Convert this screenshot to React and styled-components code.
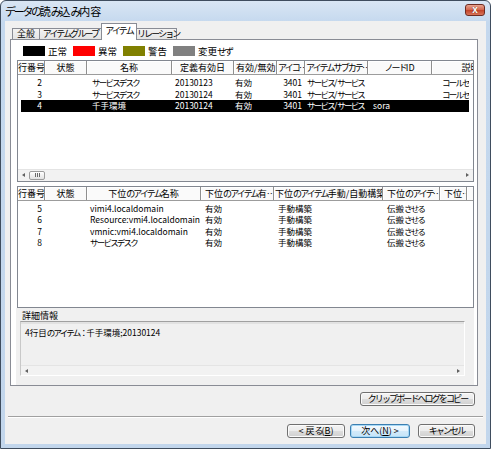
import React from 'react';
import styled, { createGlobalStyle } from 'styled-components';

const GlobalStyle = createGlobalStyle`
  html, body {
    margin: 0;
    padding: 0;
    background: #ffffff;
  }
  body {
    font-family: "Noto Sans CJK JP", "Liberation Sans", sans-serif;
    color: #000;
  }
`;

// kana in the old UI font are narrow, so squeeze them
const Kana = styled.span`
  letter-spacing: -0.21em;
`;

const KANA_RUN = /([\u3040-\u30ff\uff1a]+)/;

const Jp = ({ children }) => {
  if (typeof children !== 'string') return children;
  return children
    .split(KANA_RUN)
    .map((part, i) => (i % 2 ? <Kana key={i}>{part}</Kana> : part));
};

const Window = styled.div`
  width: 491px;
  height: 449px;
  box-sizing: border-box;
  border: 1px solid #3f4d5e;
  border-radius: 6px 6px 0 0;
  background: linear-gradient(#d9e6f4, #c4d8ee 22px, #c2d6ec 100%);
  display: flex;
  flex-direction: column;
  overflow: hidden;
`;

const TitleBar = styled.div`
  height: 20px;
  display: flex;
  align-items: center;
  justify-content: space-between;
  padding: 0 5px 0 4px;
`;

const Title = styled.span`
  font-size: 11px;
  line-height: 14px;
`;

const CloseButton = styled.div`
  width: 20px;
  height: 12px;
  box-sizing: border-box;
  margin-top: -3px;
  border: 1px solid #6e2c22;
  border-radius: 3px;
  background: linear-gradient(#e8a48f, #d2654c 50%, #c24127 51%, #d8755a);
  color: #fff;
  font-family: "Liberation Sans", sans-serif;
  font-size: 10px;
  font-weight: bold;
  line-height: 10px;
  text-align: center;
  text-shadow: 0 0 1px #5a1a10;
`;

const Client = styled.div`
  flex: 1;
  margin: 0 4px 4px 4px;
  background: #f0f0f0;
  padding: 3px 8px 0 5px;
  display: flex;
  flex-direction: column;
`;

const TabStrip = styled.div`
  display: flex;
  align-items: flex-end;
  height: 16px;
  padding-left: 3px;
  position: relative;
  z-index: 1;
  margin-bottom: -1px;
`;

const Tab = styled.div`
  width: ${(p) => p.$w}px;
  height: ${(p) => (p.$active ? 17 : 12)}px;
  box-sizing: border-box;
  margin-left: -1px;
  border: 1px solid #898c95;
  border-bottom: ${(p) => (p.$active ? 'none' : '1px solid #898c95')};
  background: ${(p) => (p.$active ? '#ffffff' : 'linear-gradient(#f3f3f3, #e4e4e4)')};
  font-size: 9px;
  line-height: ${(p) => (p.$active ? 14 : 10)}px;
  text-align: center;
  white-space: nowrap;
`;

const Panel = styled.div`
  width: 468px;
  height: 347px;
  box-sizing: border-box;
  border: 1px solid #898c95;
  background: #ffffff;
  padding: 0 3px 0 6px;
  display: flex;
  flex-direction: column;
`;

const Legend = styled.div`
  display: flex;
  height: 10px;
  margin: 6px 0 4px 6px;
`;

const LegendItem = styled.div`
  width: 50px;
  display: flex;
  align-items: center;
  gap: 3px;
  font-size: 9.5px;
  line-height: 10px;
  white-space: nowrap;
`;

const Swatch = styled.span`
  flex: 0 0 22px;
  height: 10px;
  background: ${(p) => p.$color};
`;

const ListView = styled.div`
  height: ${(p) => p.$h}px;
  box-sizing: border-box;
  border: 1px solid #828790;
  display: flex;
  flex-direction: column;
  overflow: hidden;
`;

const ListHeader = styled.div`
  display: flex;
  height: ${(p) => p.$h}px;
  box-sizing: border-box;
  border-bottom: 1px solid #9c9c9c;
  background: #fafafa;
  overflow: hidden;
  flex-shrink: 0;
`;

const HeadCell = styled.div`
  flex: 0 0 ${(p) => p.$w}px;
  box-sizing: border-box;
  border-right: 1px solid #8f8f8f;
  box-shadow: inset 1px 1px 0 #ffffff;
  padding: 0 ${(p) => p.$pad}px;
  font-size: 9px;
  line-height: ${(p) => p.$h - 1}px;
  text-align: ${(p) => p.$align};
  white-space: nowrap;
  overflow: hidden;
`;

const ListBody = styled.div`
  flex: 1;
  padding: ${(p) => p.$top}px 0 0 3px;
  overflow: hidden;
`;

const Row = styled.div`
  display: flex;
  width: 448px;
  height: 11.5px;
  overflow: hidden;
  background: ${(p) => (p.$selected ? '#000000' : 'transparent')};
  color: ${(p) => (p.$selected ? '#ffffff' : '#000000')};
`;

const Cell = styled.div`
  flex: 0 0 ${(p) => p.$w}px;
  box-sizing: border-box;
  padding: ${(p) => (p.$align === 'right' ? `0 ${p.$pad}px 0 0` : `0 0 0 ${p.$pad}px`)};
  font-size: 8.5px;
  line-height: 11.5px;
  text-align: ${(p) => p.$align};
  white-space: nowrap;
  overflow: hidden;
`;

const HScroll = styled.div`
  display: flex;
  align-items: stretch;
  height: ${(p) => p.$h}px;
  flex-shrink: 0;
  background: #f2f2f2;
  border-top: 1px solid #e4e4e4;
`;

const ScrollArrow = styled.div`
  width: 11px;
  display: flex;
  align-items: center;
  justify-content: center;
  &::before {
    content: '';
    border-style: solid;
    border-width: ${(p) => (p.$dir === 'left' ? '2px 3px 2px 0' : '2px 0 2px 3px')};
    border-color: ${(p) =>
      p.$dir === 'left'
        ? 'transparent #606060 transparent transparent'
        : 'transparent transparent transparent #606060'};
  }
`;

const ScrollTrack = styled.div`
  flex: 1;
  display: flex;
  align-items: stretch;
  padding: 1px 0;
`;

const Thumb = styled.div`
  width: 16px;
  box-sizing: border-box;
  border: 1px solid #9c9c9c;
  border-radius: 2px;
  background: linear-gradient(#ffffff, #e2e2e2);
  display: flex;
  align-items: center;
  justify-content: center;
  &::after {
    content: '';
    width: 5px;
    height: 4px;
    background: repeating-linear-gradient(90deg, #6a6a6a 0 1px, transparent 1px 2px);
  }
`;

const Gap = styled.div`
  height: 4px;
  flex-shrink: 0;
`;

const Details = styled.div`
  height: 75px;
  margin: 0 0 0 -1px;
  background: #f0f0f0;
  padding: 2px 0 0 6px;
  display: flex;
  flex-direction: column;
`;

const DetailsLabel = styled.div`
  font-size: 9px;
  line-height: 11px;
`;

const TextBox = styled.div`
  width: 445px;
  height: 55px;
  margin-left: -2px;
  box-sizing: border-box;
  border-top: 1px solid #a0a0a0;
  border-left: 1px solid #c8c8c8;
  border-right: 1px solid #ffffff;
  border-bottom: 1px solid #ffffff;
  box-shadow: inset 0 2px 0 #e2e2e2;
  display: flex;
  flex-direction: column;
`;

const TextContent = styled.div`
  flex: 1;
  padding: 4px 4px 0 4px;
  font-size: 8.5px;
  line-height: 12px;
`;

const ButtonRow = styled.div`
  display: flex;
  justify-content: flex-end;
  margin-top: ${(p) => p.$top}px;
  padding-right: 3px;
`;

const Button = styled.div`
  width: ${(p) => p.$w}px;
  height: 14px;
  box-sizing: border-box;
  margin-left: ${(p) => p.$ml || 0}px;
  border: 1px solid ${(p) => (p.$default ? '#3c7fb1' : '#707070')};
  border-radius: 3px;
  background: ${(p) =>
    p.$default
      ? 'linear-gradient(#f4fafe, #e6f3fc 50%, #d2eafa 51%, #c6e4f8)'
      : 'linear-gradient(#f3f3f3, #ececec 50%, #dddddd 51%, #d0d0d0)'};
  box-shadow: inset 0 0 0 1px ${(p) => (p.$default ? '#a6d8f6' : '#fbfbfb')};
  font-size: 9px;
  line-height: 12px;
  text-align: center;
  white-space: nowrap;
`;

const Separator = styled.div`
  margin: 10px -5px 0 -2px;
  border-top: 1px solid #a0a0a0;
  border-bottom: 1px solid #ffffff;
`;

const upperCols = [
  { key: 'no', label: '行番号', w: 27, head: 'left', hp: 0, cell: 'right', pad: 3 },
  { key: 'state', label: '状態', w: 42, head: 'center', hp: 2, cell: 'left', pad: 3 },
  { key: 'name', label: '名称', w: 85, head: 'center', hp: 2, cell: 'left', pad: 5 },
  { key: 'date', label: '定義有効日', w: 62, head: 'center', hp: 2, cell: 'left', pad: 3 },
  { key: 'valid', label: '有効/無効', w: 43, head: 'left', hp: 2, cell: 'left', pad: 1 },
  { key: 'icon', label: 'アイコ…', w: 28, head: 'left', hp: 1, cell: 'right', pad: 3 },
  { key: 'sub', label: 'アイテムサブカテ…', w: 63, head: 'left', hp: 1, cell: 'left', pad: 2 },
  { key: 'node', label: 'ノードID', w: 64, head: 'center', hp: 2, cell: 'left', pad: 5 },
  { key: 'desc', label: '説明', w: 78, head: 'center', hp: 2, cell: 'left', pad: 10 },
];

const upperRows = [
  { no: '2', name: 'サービスデスク', date: '20130123', valid: '有効', icon: '3401', sub: 'サービス/サービス', node: '', desc: 'コールセンター' },
  { no: '3', name: 'サービスデスク', date: '20130124', valid: '有効', icon: '3401', sub: 'サービス/サービス', node: '', desc: 'コールセンター' },
  { no: '4', name: '千手環境', date: '20130124', valid: '有効', icon: '3401', sub: 'サービス/サービス', node: 'sora', desc: '', selected: true },
];

const lowerCols = [
  { key: 'no', label: '行番号', w: 27, head: 'left', hp: 0, cell: 'right', pad: 3 },
  { key: 'state', label: '状態', w: 42, head: 'center', hp: 2, cell: 'left', pad: 3 },
  { key: 'name', label: '下位のアイテム名称', w: 114, head: 'center', hp: 2, cell: 'left', pad: 3 },
  { key: 'valid', label: '下位のアイテム有…', w: 73, head: 'left', hp: 4, cell: 'left', pad: 4 },
  { key: 'build', label: '下位のアイテム手動/自動構築', w: 109, head: 'left', hp: 1, cell: 'left', pad: 4 },
  { key: 'prop', label: '下位のアイテ…', w: 57, head: 'left', hp: 4, cell: 'left', pad: 4 },
  { key: 'more', label: '下位…', w: 27, head: 'left', hp: 4, cell: 'left', pad: 4 },
  { key: 'rest', label: '', w: 60, head: 'left', hp: 0, cell: 'left', pad: 0 },
];

const lowerRows = [
  { no: '5', name: 'vimi4.localdomain', valid: '有効', build: '手動構築', prop: '伝搬させる' },
  { no: '6', name: 'Resource:vmi4.localdomain', valid: '有効', build: '手動構築', prop: '伝搬させる' },
  { no: '7', name: 'vmnic:vmi4.localdomain', valid: '有効', build: '手動構築', prop: '伝搬させる' },
  { no: '8', name: 'サービスデスク', valid: '有効', build: '手動構築', prop: '伝搬させる' },
];

const legend = [
  { color: '#000000', label: '正常' },
  { color: '#ff0000', label: '異常' },
  { color: '#808000', label: '警告' },
  { color: '#808080', label: '変更せず' },
];

const tabs = [
  { label: '全般', w: 28 },
  { label: 'アイテムグループ', w: 63 },
  { label: 'アイテム', w: 36, active: true },
  { label: 'リレーション', w: 41 },
];

const Table = ({ cols, rows, height, headHeight, bodyTop, scroll }) => (
  <ListView $h={height}>
    <ListHeader $h={headHeight}>
      {cols.map((c) => (
        <HeadCell key={c.key} $w={c.w} $h={headHeight} $align={c.head} $pad={c.hp}>
          <Jp>{c.label}</Jp>
        </HeadCell>
      ))}
    </ListHeader>
    <ListBody $top={bodyTop}>
      {rows.map((r, i) => (
        <Row key={i} $selected={r.selected}>
          {cols.map((c, j) => (
            <Cell key={c.key} $w={j === 0 ? c.w - 3 : c.w} $align={c.cell} $pad={c.pad}>
              <Jp>{r[c.key] || ''}</Jp>
            </Cell>
          ))}
        </Row>
      ))}
    </ListBody>
    {scroll && (
      <HScroll $h={11}>
        <ScrollArrow $dir="left" />
        <ScrollTrack>
          <Thumb />
        </ScrollTrack>
        <ScrollArrow $dir="right" />
      </HScroll>
    )}
  </ListView>
);

const App = () => (
  <>
    <GlobalStyle />
    <Window>
      <TitleBar>
        <Title>
          <Jp>データの読み込み内容</Jp>
        </Title>
        <CloseButton>x</CloseButton>
      </TitleBar>
      <Client>
        <TabStrip>
          {tabs.map((t) => (
            <Tab key={t.label} $w={t.w} $active={t.active}>
              <Jp>{t.label}</Jp>
            </Tab>
          ))}
        </TabStrip>
        <Panel>
          <Legend>
            {legend.map((l) => (
              <LegendItem key={l.label}>
                <Swatch $color={l.color} />
                <span>
                  <Jp>{l.label}</Jp>
                </span>
              </LegendItem>
            ))}
          </Legend>
          <Table cols={upperCols} rows={upperRows} height={122} headHeight={14} bodyTop={2} scroll />
          <Gap />
          <Table cols={lowerCols} rows={lowerRows} height={123} headHeight={14} bodyTop={2} />
          <Details>
            <DetailsLabel>詳細情報</DetailsLabel>
            <TextBox>
              <TextContent>
                <Jp>4行目のアイテム：千手環境;20130124</Jp>
              </TextContent>
              <HScroll $h={9}>
                <ScrollArrow $dir="left" />
                <ScrollTrack />
                <ScrollArrow $dir="right" />
              </HScroll>
            </TextBox>
          </Details>
        </Panel>
        <ButtonRow $top={6}>
          <Button $w={115}>
            <Jp>クリップボードへログをコピー</Jp>
          </Button>
        </ButtonRow>
        <Separator />
        <ButtonRow $top={6}>
          <Button $w={58}>
            <Jp>{'< 戻る('}</Jp>
            <u>B</u>)
          </Button>
          <Button $w={60} $ml={5} $default>
            次へ(<u>N</u>) &gt;
          </Button>
          <Button $w={57} $ml={8}>
            <Jp>キャンセル</Jp>
          </Button>
        </ButtonRow>
      </Client>
    </Window>
  </>
);

export default App;
